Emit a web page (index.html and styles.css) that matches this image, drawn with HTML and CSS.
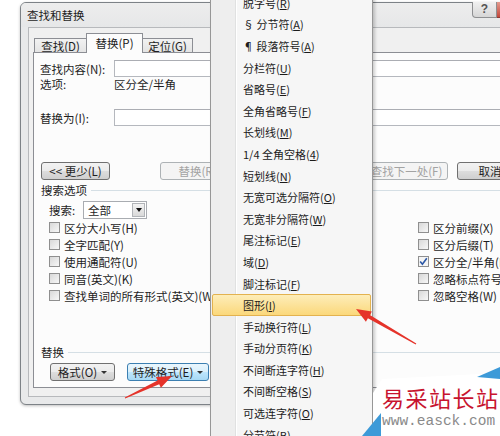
FILE: index.html
```html
<!DOCTYPE html>
<html>
<head>
<meta charset="UTF-8">
<title>查找和替换</title>
<link rel="stylesheet" href="styles.css">
</head>
<body>

<!-- The find and replace dialog -->
<div class="window">
	<div class="titlebar">
		<span class="title">查找和替换</span>
		<span class="help">?</span>
		<span class="close"></span>
	</div>
	<div class="client">
		<div class="tabs">
			<span class="tab t1">查找(D)</span>
			<span class="tab t2 active">替换(P)</span>
			<span class="tab t3">定位(G)</span>
		</div>
		<div class="panel">
			<div class="field">
				<label>查找内容(N):</label>
				<span class="input"></span>
			</div>
			<div class="field opts">
				<label>选项:</label>
				<span>区分全/半角</span>
			</div>
			<div class="field repl">
				<label>替换为(I):</label>
				<span class="input"></span>
			</div>
			<div class="btnrow">
				<span class="btn less">&lt;&lt; 更少(L)</span>
				<span class="btn dis b-repl">替换(R)</span>
				<span class="btn dis b-next">查找下一处(F)</span>
				<span class="btn b-cancel">取消</span>
			</div>
			<div class="group g-search">搜索选项</div>
			<div class="search">
				<span class="search-lbl">搜索:</span>
				<span class="select"><span class="sel-val">全部</span><span class="sel-btn"><i></i></span></span>
			</div>
			<div class="checks">
				<span class="chk"><i class="cb"></i>区分大小写(H)</span>
				<span class="chk"><i class="cb"></i>区分前缀(X)</span>
				<span class="chk"><i class="cb"></i>全字匹配(Y)</span>
				<span class="chk"><i class="cb"></i>区分后缀(T)</span>
				<span class="chk"><i class="cb"></i>使用通配符(U)</span>
				<span class="chk"><i class="cb on"><svg width="9" height="9" viewBox="0 0 9 9"><path d="M1.2 4.6 L3.4 7.2 L7.8 1.2" fill="none" stroke="#2b57a6" stroke-width="1.6"/></svg></i>区分全/半角(M)</span>
				<span class="chk"><i class="cb"></i>同音(英文)(K)</span>
				<span class="chk"><i class="cb"></i>忽略标点符号(S)</span>
				<span class="chk"><i class="cb"></i>查找单词的所有形式(英文)(W)</span>
				<span class="chk"><i class="cb"></i>忽略空格(W)</span>
			</div>
			<div class="group g-repl">替换</div>
			<div class="btnrow bottom">
				<span class="btn fmt">格式(O)<i class="dd"></i></span>
				<span class="btn hot special">特殊格式(E)<i class="dd"></i></span>
			</div>
		</div>
	</div>
</div>

<!-- Special format drop-down menu -->
<div class="menu">
	<div class="item">脱字号(<u>R</u>)</div>
	<div class="item">§ 分节符(<u>A</u>)</div>
	<div class="item">¶ 段落符号(<u>A</u>)</div>
	<div class="item">分栏符(<u>U</u>)</div>
	<div class="item">省略号(<u>E</u>)</div>
	<div class="item">全角省略号(<u>F</u>)</div>
	<div class="item">长划线(<u>M</u>)</div>
	<div class="item">1/4 全角空格(<u>4</u>)</div>
	<div class="item">短划线(<u>N</u>)</div>
	<div class="item">无宽可选分隔符(<u>O</u>)</div>
	<div class="item">无宽非分隔符(<u>W</u>)</div>
	<div class="item">尾注标记(<u>E</u>)</div>
	<div class="item">域(<u>D</u>)</div>
	<div class="item">脚注标记(<u>F</u>)</div>
	<div class="item sel">图形(<u>I</u>)</div>
	<div class="item">手动换行符(<u>L</u>)</div>
	<div class="item">手动分页符(<u>K</u>)</div>
	<div class="item">不间断连字符(<u>H</u>)</div>
	<div class="item">不间断空格(<u>S</u>)</div>
	<div class="item">可选连字符(<u>O</u>)</div>
	<div class="item">分节符(<u>B</u>)</div>
</div>

<!-- Site watermark -->
<div class="mark">
	<svg class="mark-bg" width="140" height="70" viewBox="0 0 140 70">
		<polygon points="13,27 22,13 140,7 140,70 13,70" fill="#ffffff"/>
		<polygon points="117,11 140,1 140,13" fill="#3d9ad8"/>
		<polygon points="2,70 21,47 21,70" fill="#3d9ad8"/>
	</svg>
	<div class="wm1">易采站长站</div>
	<div class="wm2">www.easck.com</div>
</div>

<!-- Red pointer arrows -->
<svg class="arrows" width="500" height="436" viewBox="0 0 500 436">
	<polygon fill="#e5332a" points="356,309 371.9,311.4 369.9,314.9 416.3,343.6 415.7,344.4 367.9,318.3 365.9,321.8"/>
	<polygon fill="#e5332a" points="172,376 155.9,377 157.6,380.6 124.8,397.5 125.2,398.5 159.2,384.2 160.9,387.8"/>
</svg>

</body>
</html>
```

FILE: styles.css
```css
html, body {
	margin: 0;
	padding: 0;
}
body {
	position: relative;
	width: 500px;
	height: 436px;
	overflow: hidden;
	background: #ffffff;
	font-family: "Noto Sans CJK SC", "Liberation Sans", sans-serif;
	font-size: 11.5px;
	color: #1e1e1e;
}

/*
 * Dialog window
 */
.window {
	position: absolute;
	left: 20px;
	top: 2px;
	width: 530px;
	height: 403px;
	box-sizing: border-box;
	border: 1px solid #7d8287;
	border-radius: 6px;
	background: #e8e9ea;
	padding: 0 0 7px 7px;
	display: flex;
	flex-direction: column;
	box-shadow: 0 1px 3px rgba(0,0,0,0.25);
}
.titlebar {
	height: 24px;
	margin-left: -7px;
	padding-right: 7px;
	display: flex;
	align-items: flex-start;
	background: linear-gradient(#ededed, #e6e7e8);
	border-radius: 5px 5px 0 0;
}
.title {
	padding: 4px 0 0 6px;
	line-height: 16px;
	margin-right: auto;
}
.help {
	width: 25px;
	height: 16px;
	margin-top: -1px;
	box-sizing: border-box;
	border: 1px solid #8e8f91;
	border-top: none;
	border-radius: 0 0 0 4px;
	background: linear-gradient(#f0f0f0, #d6d6d6);
	font-family: "Liberation Sans", sans-serif;
	font-weight: bold;
	font-size: 12px;
	line-height: 15px;
	text-align: center;
	color: #555;
}
.close {
	width: 45px;
	height: 16px;
	margin-top: -1px;
	box-sizing: border-box;
	border: 1px solid #8b3a33;
	border-top: none;
	border-left: none;
	background: linear-gradient(#e59b8f, #c3483b);
}
.client {
	flex: 1;
	display: flex;
	flex-direction: column;
	border: 1px solid #b7b9bc;
	background: #f0f0f0;
	padding: 5px 0 8px 4px;
}

/*
 * Tabs
 */
.tabs {
	height: 20px;
	display: flex;
	align-items: flex-end;
	padding-left: 1px;
}
.tab {
	height: 15px;
	box-sizing: border-box;
	border: 1px solid #8c8e94;
	border-bottom: none;
	background: linear-gradient(#f2f2f2, #e3e3e3);
	line-height: 14px;
	text-align: center;
}
.tab.t1 {
	width: 52px;
	border-right: none;
}
.tab.t2 {
	width: 57px;
}
.tab.t3 {
	width: 50px;
	border-left: none;
}
.tab.active {
	position: relative;
	z-index: 1;
	height: 20px;
	line-height: 18px;
	background: #fcfcfc;
}
.panel {
	flex: 1;
	margin-top: -1px;
	border: 1px solid #8c8e94;
	background: #fcfcfc;
	padding: 7px 10px 6px 6px;
}

/*
 * Panel rows
 */
.field {
	display: flex;
	align-items: center;
	height: 17px;
}
.field label {
	width: 74px;
}
.field.opts {
	height: 14px;
}
.field.repl {
	margin-top: 18px;
}
.input {
	flex: 1;
	height: 17px;
	box-sizing: border-box;
	border: 1px solid #b5b8be;
	border-top-color: #abadb3;
	background: #ffffff;
}
.btnrow {
	display: flex;
	margin-top: 36px;
	height: 18px;
}
.btnrow.bottom {
	margin-top: 4px;
	padding-left: 10px;
}
.btn {
	height: 18px;
	box-sizing: border-box;
	border: 1px solid #707070;
	border-radius: 3px;
	background: linear-gradient(#f2f2f2 0%, #ebebeb 50%, #dddddd 51%, #cfcfcf 100%);
	line-height: 16px;
	text-align: center;
	display: flex;
	align-items: center;
	justify-content: center;
}
.btn.dis {
	border-color: #adb2b5;
	background: #f4f4f4;
	color: #a3a3a3;
}
.btn.less {
	width: 69px;
	margin-left: 1px;
}
.btn.b-repl {
	width: 75px;
	margin-left: 50px;
}
.btn.b-next {
	width: 83px;
	margin-left: 130px;
}
.btn.b-cancel {
	width: 66px;
	margin-left: 9px;
}
.btn.fmt {
	width: 65px;
}
.btn.special {
	width: 82px;
	margin-left: 12px;
}
.btn.hot {
	border-color: #3c7fb1;
	background: linear-gradient(#eaf6fd 0%, #d9f0fc 50%, #bee6fd 51%, #a7d9f5 100%);
}
.dd {
	display: inline-block;
	margin-left: 4px;
	border-left: 3px solid transparent;
	border-right: 3px solid transparent;
	border-top: 3px solid #333;
}
.group {
	display: flex;
	align-items: center;
	height: 14px;
	margin-top: 3px;
	margin-left: 1px;
}
.group::after {
	content: "";
	flex: 1;
	margin-left: 4px;
	border-top: 1px solid #d5dfe5;
}
.group.g-repl {
	margin-top: 41px;
}

/*
 * Search scope and check boxes
 */
.search {
	display: flex;
	align-items: center;
	height: 18px;
	margin-top: 4px;
	padding-left: 9px;
}
.search-lbl {
	width: 34px;
}
.select {
	width: 64px;
	height: 18px;
	box-sizing: border-box;
	border: 1px solid #a9acb1;
	background: #ffffff;
	display: flex;
	align-items: center;
}
.sel-val {
	padding-left: 4px;
	margin-right: auto;
}
.sel-btn {
	width: 13px;
	height: 14px;
	margin-right: 1px;
	box-sizing: border-box;
	border: 1px solid #b1b4b8;
	background: linear-gradient(#f3f3f3, #d9d9d9);
	display: flex;
	align-items: center;
	justify-content: center;
}
.sel-btn i {
	border-left: 3px solid transparent;
	border-right: 3px solid transparent;
	border-top: 4px solid #111;
}
.checks {
	display: grid;
	grid-template-columns: 369px auto;
	grid-auto-rows: 17px;
	padding-left: 9px;
}
.chk {
	display: flex;
	align-items: center;
	white-space: nowrap;
}
.cb {
	width: 11px;
	height: 11px;
	box-sizing: border-box;
	margin-right: 4px;
	border: 1px solid #8f8f8f;
	background: linear-gradient(135deg, #d8d8d8, #f7f7f7);
	display: flex;
	align-items: center;
	justify-content: center;
}
.cb.on {
	background: #f4f4f4;
}

/*
 * Special format menu
 */
.menu {
	position: absolute;
	z-index: 5;
	left: 210px;
	top: -9px;
	width: 163px;
	height: 470px;
	box-sizing: border-box;
	border: 1px solid #979797;
	background: linear-gradient(to right, #eeeeee 0, #eeeeee 24px, #e0e1e1 24px, #e0e1e1 25px, #ffffff 25px, #ffffff 26px, #f6f6f6 26px);
	box-shadow: 2px 2px 3px rgba(0,0,0,0.2);
	font-size: 11px;
	color: #1b1b1b;
}
.item {
	height: 21.6px;
	box-sizing: border-box;
	margin: 0 1px;
	border: 1px solid transparent;
	border-radius: 2px;
	padding-left: 30px;
	display: flex;
	align-items: center;
	white-space: nowrap;
}
.item.sel {
	border-color: #e3b24f;
	background: linear-gradient(#fdedb9, #fbd87b);
}

/*
 * Watermark and arrows
 */
.mark {
	position: absolute;
	z-index: 6;
	left: 360px;
	top: 366px;
	width: 140px;
	height: 70px;
	padding: 18px 0 0 22px;
	box-sizing: border-box;
}
.mark-bg {
	position: absolute;
	left: 0;
	top: 0;
}
.wm1 {
	position: relative;
	font-size: 22px;
	line-height: 26px;
	letter-spacing: 1.5px;
	color: #c8142f;
	white-space: nowrap;
}
.wm2 {
	position: relative;
	margin-top: 4px;
	font-family: "Liberation Mono", monospace;
	font-size: 14.5px;
	line-height: 14px;
	color: #8a8a8a;
	white-space: nowrap;
}
.arrows {
	position: absolute;
	z-index: 7;
	left: 0;
	top: 0;
}
```
